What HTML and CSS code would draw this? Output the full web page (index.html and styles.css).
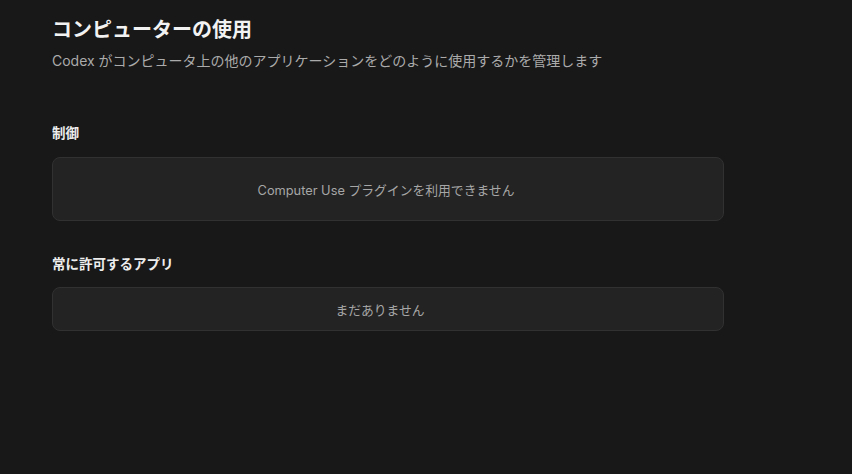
FILE: index.html
```html
<!DOCTYPE html>
<html lang="ja">
<head>
	<title>コンピューターの使用</title>
	<meta charset="UTF-8">
	<link rel="stylesheet" href="styles.css">
</head>
<body>
	<div class="page">
		<h1 class="title">コンピューターの使用</h1>
		<p class="subtitle">Codex がコンピュータ上の他のアプリケーションをどのように使用するかを管理します</p>

		<div class="section first">
			<h2 class="section-title">制御</h2>
			<div class="panel tall">Computer Use プラグインを利用できません</div>
		</div>

		<div class="section">
			<h2 class="section-title">常に許可するアプリ</h2>
			<div class="panel short">まだありません</div>
		</div>
	</div>
</body>
</html>
```

FILE: styles.css
```css
*{
	margin: 0;
	padding: 0;
	box-sizing: border-box;
}
html, body{
	height: 100%;
}
body{
	background: #181818;
	color: #ececec;
	font-family: Inter, "Noto Sans CJK JP", sans-serif;
}
.page{
	width: 672px;
	margin-left: 52px;
	padding-top: 18px;
}
.title{
	font-size: 20px;
	font-weight: 700;
	line-height: 24px;
	color: #f2f2f2;
}
.subtitle{
	margin-top: 9px;
	font-size: 14px;
	line-height: 20px;
	color: #ababab;
}
.section{
	margin-top: 33px;
}
.section.first{
	margin-top: 52px;
}
.section-title{
	font-size: 13.5px;
	font-weight: 700;
	line-height: 20px;
	color: #ededed;
}
.panel{
	margin-top: 13px;
	display: flex;
	align-items: center;
	justify-content: center;
	background: #232323;
	border: 1px solid #313131;
	border-radius: 8px;
	font-size: 12.8px;
	color: #a6a6a6;
}
.panel.tall{
	height: 64px;
	margin-top: 14px;
	padding-right: 4px;
}
.panel.short{
	height: 44px;
	padding-right: 16px;
}
```
